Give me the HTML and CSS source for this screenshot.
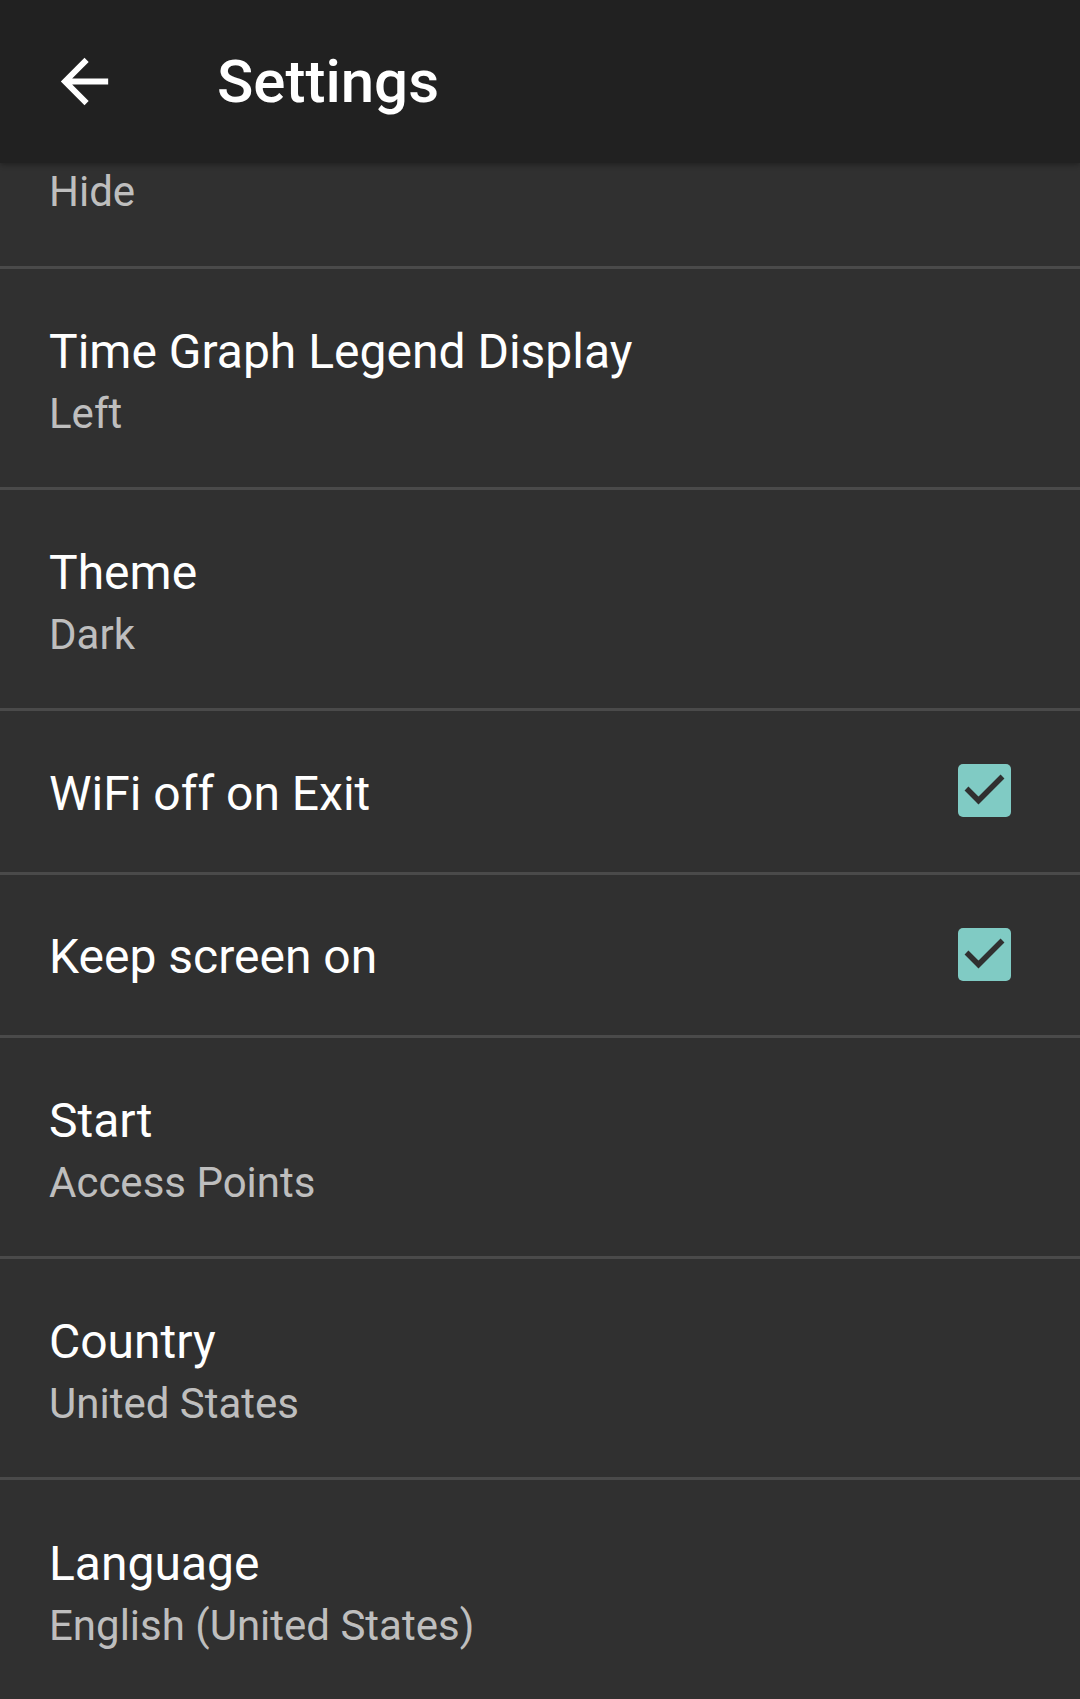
FILE: index.html
```html
<!DOCTYPE html>
<html>
<head>
<meta charset="utf-8">
<link rel="stylesheet" href="styles.css">
</head>
<body>
<div class="screen">
  <header class="toolbar">
    <svg class="back" viewBox="0 0 24 24" width="71" height="71"><path fill="#fff" d="M20 11H7.83l5.59-5.59L12 4l-8 8 8 8 1.41-1.41L7.83 13H20v-2z"/></svg>
    <h1 class="title">Settings</h1>
  </header>
  <main class="list">
    <div class="row first">
      <div class="texts"><div class="summary">Hide</div></div>
    </div>
    <div class="row two">
      <div class="texts"><div class="label">Time Graph Legend Display</div><div class="summary">Left</div></div>
    </div>
    <div class="row two">
      <div class="texts"><div class="label">Theme</div><div class="summary">Dark</div></div>
    </div>
    <div class="row one">
      <div class="texts"><div class="label">WiFi off on Exit</div></div>
      <span class="check"><svg viewBox="0 0 53 53" width="53" height="53"><path d="M8.5 24.5 L20.5 36.5 L44.5 12.5" fill="none" stroke="#303030" stroke-width="5.5"/></svg></span>
    </div>
    <div class="row one">
      <div class="texts"><div class="label">Keep screen on</div></div>
      <span class="check"><svg viewBox="0 0 53 53" width="53" height="53"><path d="M8.5 24.5 L20.5 36.5 L44.5 12.5" fill="none" stroke="#303030" stroke-width="5.5"/></svg></span>
    </div>
    <div class="row two">
      <div class="texts"><div class="label">Start</div><div class="summary">Access Points</div></div>
    </div>
    <div class="row two">
      <div class="texts"><div class="label">Country</div><div class="summary">United States</div></div>
    </div>
    <div class="row two last">
      <div class="texts"><div class="label">Language</div><div class="summary">English (United States)</div></div>
    </div>
  </main>
</div>
</body>
</html>
```
FILE: styles.css
```css
html, body {
  margin: 0;
  padding: 0;
  background: #303030;
}
.screen {
  width: 1080px;
  height: 1699px;
  overflow: hidden;
  display: flex;
  flex-direction: column;
  font-family: Roboto, "Noto Sans", sans-serif;
  background: #303030;
}
.toolbar {
  position: relative;
  z-index: 2;
  flex: 0 0 163px;
  height: 163px;
  background: #212121;
  display: flex;
  align-items: center;
  box-shadow: 0 2px 5px rgba(0,0,0,0.3);
}
.back {
  margin-left: 49px;
  flex: 0 0 auto;
}
.title {
  margin: 0 0 0 97px;
  font-size: 60px;
  line-height: 70px;
  font-weight: 500;
  color: #fff;
  letter-spacing: 0;
}
.list {
  flex: 1 1 auto;
  overflow: hidden;
  display: flex;
  flex-direction: column;
}
.row {
  flex: 0 0 auto;
  display: flex;
  align-items: center;
  padding-left: 49px;
  padding-right: 69px;
  border-bottom: 3px solid #4a4a4a;
  box-sizing: border-box;
}
.row.first {
  height: 106px;
  align-items: flex-start;
  padding-top: 0;
}
.row.first .summary { margin-top: -2px; }
.row.two {
  height: 221px;
  padding-top: 8px;
}
.row.one {
  height: 163.5px;
  padding-top: 5px;
}
.row.last { border-bottom: none; }
.texts {
  flex: 1 1 auto;
  display: flex;
  flex-direction: column;
}
.label {
  font-size: 48px;
  line-height: 62px;
  color: #fff;
  white-space: nowrap;
}
.summary {
  font-size: 42px;
  line-height: 61px;
  color: rgba(255,255,255,0.7);
  white-space: nowrap;
}
.check {
  flex: 0 0 auto;
  width: 53px;
  height: 53px;
  margin-bottom: 6px;
  border-radius: 5px;
  background: #80cbc4;
  display: flex;
}
```
